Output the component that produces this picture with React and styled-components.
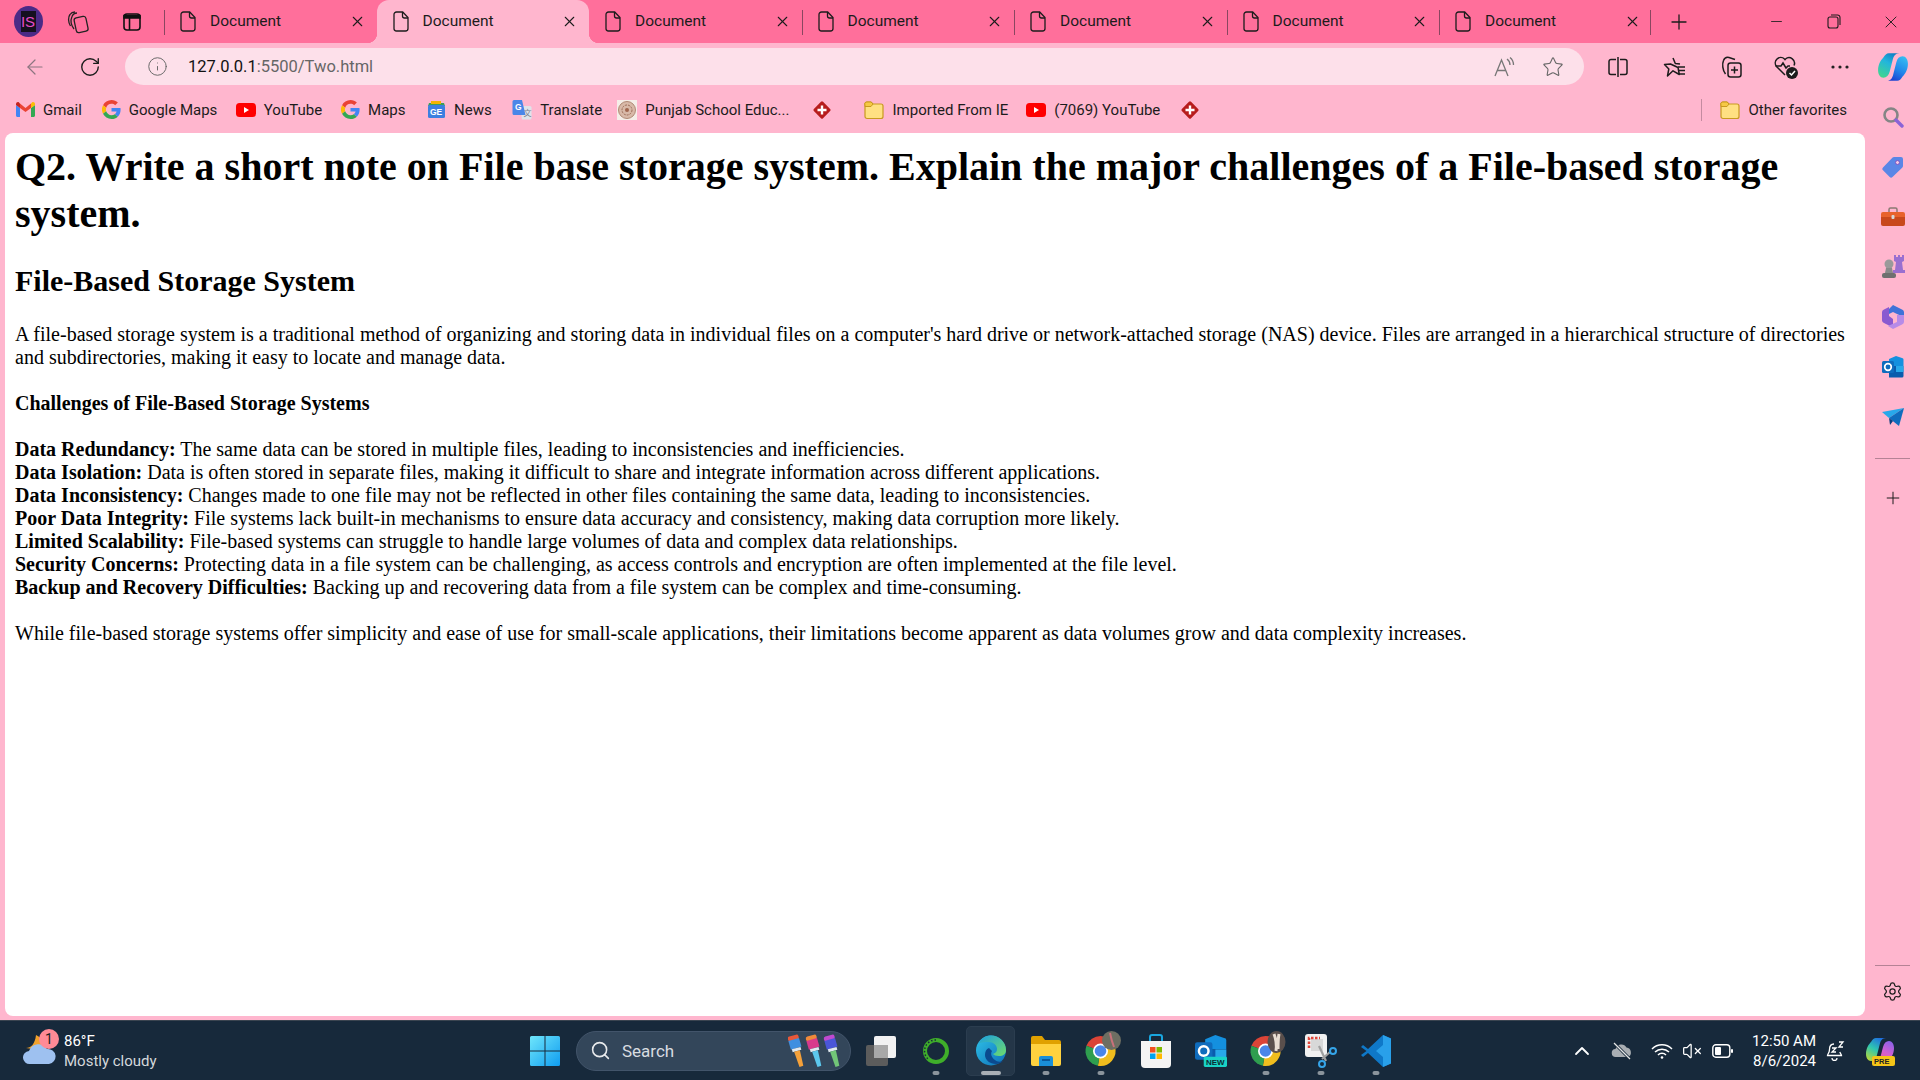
import React from 'react'
import styled, { createGlobalStyle } from 'styled-components'
import { ArrowLeft, RotateCw, Info, Star, X, Plus, Minus, Search, Settings, ChevronUp, VolumeX } from 'lucide-react'

const GlobalStyle = createGlobalStyle`
  html, body { margin: 0; padding: 0; background: #ffb6ce; }
  #root { width: 1920px; height: 1080px; overflow: hidden; }
`

const uiFont = `Roboto, "Open Sans", sans-serif`

const Screen = styled.div`
  width: 1920px;
  height: 1080px;
  display: flex;
  flex-direction: column;
  overflow: hidden;
  background: #ffb6ce;
  font-family: ${uiFont};
  color: #1c1c1c;
`

/* ---------- tab strip ---------- */
const TabStrip = styled.div`
  height: 43px;
  flex: none;
  display: flex;
  align-items: stretch;
  background: #ff6f9b;
`
const StripIcon = styled.div`
  width: ${p => p.$w}px;
  flex: none;
  display: flex;
  align-items: center;
  justify-content: center;
`
const Avatar = styled.div`
  width: 29px;
  height: 31px;
  border-radius: 50%;
  background: #4b2a86;
  display: flex;
  align-items: center;
  justify-content: center;
  color: #e64cc8;
  font-size: 15px;
  font-family: "Liberation Sans", sans-serif;
  &::before {
    content: 'IS';
    width: 15px;
    height: 21px;
    background: #15101e;
    display: flex;
    align-items: center;
    justify-content: center;
  }
`
const Tab = styled.div`
  width: 212.5px;
  flex: none;
  position: relative;
  display: flex;
  align-items: center;
  padding-left: 16px;
  box-sizing: border-box;
  font-size: 15.5px;
  background: ${p => (p.$active ? '#ffb6ce' : 'transparent')};
  border-radius: ${p => (p.$active ? '12px 12px 0 0' : '0')};
  &::before {
    content: '';
    position: absolute;
    left: 0;
    top: 10px;
    height: 25px;
    width: 1px;
    background: ${p => (p.$sep ? '#8a4660' : 'transparent')};
  }
  ${p => p.$active && `
    &::after {
      content: '';
      position: absolute;
      left: -10px;
      right: -10px;
      bottom: 0;
      height: 10px;
      background:
        radial-gradient(circle at 0 0, transparent 10px, #ffb6ce 10.5px) left bottom / 10px 10px no-repeat,
        radial-gradient(circle at 100% 0, transparent 10px, #ffb6ce 10.5px) right bottom / 10px 10px no-repeat;
    }
  `}
`
const TabTitle = styled.span`
  margin-left: 13px;
  flex: 1;
  padding-bottom: 1px;
`
const TabClose = styled.span`
  display: flex;
  margin-right: 11px;
`
const NewTab = styled.div`
  width: 54px;
  flex: none;
  position: relative;
  display: flex;
  align-items: center;
  justify-content: center;
  &::before {
    content: '';
    position: absolute;
    left: -2px;
    top: 10px;
    height: 25px;
    width: 1px;
    background: #8a4660;
  }
`
const WindowButton = styled.div`
  width: ${p => p.$w}px;
  flex: none;
  display: flex;
  align-items: center;
  justify-content: center;
  ${p => p.$push && 'margin-left: auto;'}
`

/* ---------- toolbar ---------- */
const Toolbar = styled.div`
  height: 47px;
  flex: none;
  display: flex;
  align-items: center;
  padding-left: 8px;
  box-sizing: border-box;
`
const ToolButton = styled.div`
  width: ${p => p.$w || 55}px;
  height: 37px;
  flex: none;
  display: flex;
  align-items: center;
  justify-content: center;
`
const AddressBar = styled.div`
  width: 1459px;
  height: 37px;
  flex: none;
  margin-left: 8px;
  border-radius: 19px;
  background: #fde0ea;
  display: flex;
  align-items: center;
  padding-left: 22px;
  padding-right: 6px;
  box-sizing: border-box;
`
const Url = styled.div`
  flex: 1;
  margin-left: 20px;
  font-size: 16.5px;
  color: #666;
  & b { font-weight: 400; color: #111; }
`
const ActionRow = styled.div`
  display: flex;
  margin-left: 6px;
`

/* ---------- middle ---------- */
const Middle = styled.div`
  flex: 1;
  min-height: 0;
  display: flex;
`
const Browser = styled.div`
  width: 1865px;
  flex: none;
  display: flex;
  flex-direction: column;
`
const Favorites = styled.div`
  height: 43px;
  flex: none;
  display: flex;
  align-items: center;
  padding: 0 0 4px 16px;
  box-sizing: border-box;
  font-size: 15px;
`
const Favorite = styled.div`
  display: flex;
  align-items: center;
  gap: 8px;
  margin-right: ${p => p.$gap ?? 20}px;
  white-space: nowrap;
`
const FavDivider = styled.div`
  width: 1px;
  height: 22px;
  background: #c48ba0;
  margin-left: auto;
  margin-right: 18px;
`
const Page = styled.div`
  flex: 1;
  margin: 0 0 4px 5px;
  padding: 10px;
  background: #fff;
  border-radius: 8px;
  color: #000;
  font-family: "Liberation Serif", "Times New Roman", serif;
  font-size: 20px;
  line-height: 23px;
`
const Heading = styled.h1`
  margin: 0 0 27px;
  font-size: 40px;
  line-height: 47px;
`
const SubHeading = styled.h2`
  margin: 0 0 25px;
  font-size: 30px;
  line-height: 34px;
`
const Paragraph = styled.p`
  margin: 0 0 23px;
`
const Sidebar = styled.div`
  width: 55px;
  flex: none;
  display: flex;
  flex-direction: column;
  align-items: center;
  padding: 2px 0 4px;
  box-sizing: border-box;
`
const SideSlot = styled.div`
  width: 55px;
  height: 50px;
  flex: none;
  display: flex;
  align-items: center;
  justify-content: center;
`
const SideRule = styled.div`
  width: 35px;
  height: 1px;
  flex: none;
  margin: ${p => p.$m};
  background: #b58295;
`

/* ---------- taskbar ---------- */
const Taskbar = styled.div`
  height: 60px;
  flex: none;
  display: flex;
  align-items: center;
  background: #17293b;
  border-top: 1px solid #3a4450;
  box-sizing: border-box;
  color: #fff;
  font-family: ${uiFont};
`
const Weather = styled.div`
  width: 517px;
  flex: none;
  display: flex;
  align-items: center;
  padding-left: 23px;
  box-sizing: border-box;
  position: relative;
`
const WeatherBadge = styled.span`
  position: absolute;
  left: 39px;
  top: -2px;
  width: 20px;
  height: 20px;
  border-radius: 50%;
  background: #ff8a96;
  color: #222;
  font-size: 14px;
  display: flex;
  align-items: center;
  justify-content: center;
`
const WeatherText = styled.div`
  margin-left: 7px;
  font-size: 15px;
  line-height: 20px;
  & span { display: block; color: #d4d8dc; }
`
const TaskSlot = styled.div`
  width: 55px;
  height: 50px;
  flex: none;
  position: relative;
  display: flex;
  align-items: center;
  justify-content: center;
  ${p => p.$active && `
    &::before {
      content: '';
      position: absolute;
      inset: 0 3px;
      border-radius: 5px;
      background: #243648;
      border: 1px solid #2b3d4f;
    }
    & > svg { position: relative; }
  `}
  ${p => p.$dot && `
    &::after {
      content: '';
      position: absolute;
      bottom: 1px;
      left: 50%;
      transform: translateX(-50%);
      width: ${p.$active ? 20 : 7}px;
      height: 4px;
      border-radius: 2px;
      background: ${p.$active ? '#a8afb6' : '#8b949c'};
    }
  `}
`
const SearchPill = styled.div`
  width: 275px;
  height: 40px;
  flex: none;
  margin: 0 2px 0 4px;
  border-radius: 20px;
  background: #33465a;
  border: 1px solid #42546a;
  box-sizing: border-box;
  display: flex;
  align-items: center;
  padding-left: 13px;
  padding-right: 6px;
  color: #d8dce0;
  font-size: 17px;
`
const SearchLabel = styled.span`
  flex: 1;
  margin-left: 11px;
`
const Tray = styled.div`
  flex: 1;
  display: flex;
  align-items: center;
  padding-left: 164px;
`
const TrayIcon = styled.div`
  width: ${p => p.$w}px;
  flex: none;
  display: flex;
  justify-content: center;
`
const Clock = styled.div`
  width: 79px;
  flex: none;
  text-align: right;
  font-size: 15px;
  line-height: 20px;
`

/* ---------- drawn icons ---------- */
const DocIcon = () => (
  <svg width="17" height="21" viewBox="0 0 17 21" fill="none" stroke="#1c1c1c" strokeWidth="1.3">
    <path d="M3.5 1h6.2L15 6.5V17.5a2.5 2.5 0 0 1-2.5 2.5h-9A2.5 2.5 0 0 1 1 17.5v-14A2.5 2.5 0 0 1 3.5 1z" />
    <path d="M9.5 1v4a2 2 0 0 0 2 2H15" />
  </svg>
)
const WorkspacesIcon = () => (
  <svg width="24" height="24" viewBox="0 0 24 24" fill="none" stroke="#222" strokeWidth="1.3">
    <rect x="9" y="7" width="12" height="15" rx="2.5" transform="rotate(-12 15 14)" />
    <path d="M8 19C5 15 4.5 10 6 6.5 7 4 9 3 11 3" />
    <path d="M4.5 16C2 12 2 7 4 4.5 5 3 7 2 9 2" />
  </svg>
)
const VerticalTabsIcon = () => (
  <svg width="20" height="20" viewBox="0 0 20 20" fill="none" stroke="#111" strokeWidth="1.6">
    <rect x="2" y="2" width="16" height="16" rx="3" />
    <path d="M2 3.5h16V6H2z" fill="#111" />
    <path d="M7.5 6v12" />
  </svg>
)
const GoogleG = () => (
  <svg width="19" height="19" viewBox="0 0 48 48">
    <path fill="#EA4335" d="M24 9.5c3.5 0 6.7 1.2 9.2 3.6l6.9-6.9C35.9 2.4 30.5 0 24 0 14.6 0 6.5 5.4 2.6 13.2l8 6.2C12.5 13.6 17.8 9.5 24 9.5z" />
    <path fill="#4285F4" d="M47 24.5c0-1.6-.2-3.1-.4-4.5H24v9h12.9c-.6 3-2.2 5.4-4.7 7.1l7.7 6C44.4 38 47 31.8 47 24.5z" />
    <path fill="#FBBC05" d="M10.6 28.6A14.5 14.5 0 0 1 10.6 19.4l-8-6.2a24 24 0 0 0 0 21.6z" />
    <path fill="#34A853" d="M24 48c6.5 0 11.9-2.1 15.9-5.900l-7.700-6c-2.200 1.500-4.900 2.400-8.200 2.400-6.200 0-11.500-4.100-13.400-9.900l-8 6.200C6.500 42.600 14.600 48 24 48z" />
  </svg>
)
const GmailIcon = () => (
  <svg width="19" height="15" viewBox="0 0 19 15">
    <path fill="#4285F4" d="M0 3v10.500C0 14.300.7 15 1.500 15H4V6z" />
    <path fill="#34A853" d="M15 6v9h2.500c.8 0 1.500-.7 1.500-1.500V3z" />
    <path fill="#EA4335" d="M4 6V1.500L9.500 6 15 1.500V6L9.500 10z" />
    <path fill="#C5221F" d="M0 3V2C0 .4 1.800-.5 3 .4L4 1.500V6z" />
    <path fill="#FBBC05" d="M19 3V2c0-1.600-1.800-2.500-3-1.600L15 1.500V6z" />
  </svg>
)
const YoutubeIcon = () => (
  <svg width="20" height="14" viewBox="0 0 20 14">
    <rect width="20" height="14" rx="3.5" fill="#f00" />
    <path d="M8 4l5 3-5 3z" fill="#fff" />
  </svg>
)
const NewsIcon = () => (
  <svg width="19" height="19" viewBox="0 0 19 19">
    <path d="M2 3h15l1 3H1z" fill="#3f9d58" />
    <path d="M4 1h10v3H4z" fill="#f4b400" />
    <rect x="1" y="5" width="17" height="13" rx="1.5" fill="#3d7fe0" />
    <text x="3" y="15" fontSize="8.5" fontWeight="700" fill="#fff" fontFamily="Liberation Sans, sans-serif">GE</text>
  </svg>
)
const TranslateIcon = () => (
  <svg width="20" height="20" viewBox="0 0 20 20">
    <path d="M8 6h10a1.500 1.500 0 0 1 1.500 1.500V18a1.500 1.500 0 0 1-1.500 1.500H10z" fill="#dfe3ea" />
    <text x="11.5" y="16" fontSize="8" fill="#7a8290" fontFamily="Noto Sans CJK SC, sans-serif">文</text>
    <path d="M2 0h8l3.500 15H2a1.500 1.500 0 0 1-1.500-1.500v-12A1.500 1.500 0 0 1 2 0z" fill="#4a86e8" />
    <text x="3" y="10" fontSize="8.5" fontWeight="700" fill="#fff" fontFamily="Liberation Sans, sans-serif">G</text>
  </svg>
)
const CrestIcon = () => (
  <svg width="20" height="20" viewBox="0 0 20 20">
    <rect width="20" height="20" fill="#f5eee8" />
    <circle cx="10" cy="10" r="8.5" fill="#d8b9a8" stroke="#b08a75" />
    <circle cx="10" cy="10" r="5" fill="none" stroke="#9c6d58" strokeDasharray="2 1" />
    <circle cx="10" cy="10" r="2" fill="#a0664e" />
  </svg>
)
const DiamondIcon = () => (
  <svg width="20" height="20" viewBox="0 0 20 20">
    <rect x="3.5" y="3.5" width="13" height="13" rx="1.5" transform="rotate(45 10 10)" fill="#b71c1c" />
    <path d="M10 5.500v9M5.500 10h9" stroke="#fff" strokeWidth="2.4" />
  </svg>
)
const FolderIcon = () => (
  <svg width="20" height="20" viewBox="0 0 20 20">
    <path d="M1 4a2 2 0 0 1 2-2h4l2 2h8a2 2 0 0 1 2 2v10.500a2 2 0 0 1-2 2H3a2 2 0 0 1-2-2z" fill="#ffe082" stroke="#c99a1f" strokeWidth="1.2" />
    <path d="M1 5a2 2 0 0 1 2-3h4l2 2-2 2.500H1z" fill="#f6c945" stroke="#c99a1f" />
  </svg>
)
const ReadAloudIcon = () => (
  <svg width="22" height="22" viewBox="0 0 22 22" fill="none" stroke="#777" strokeWidth="1.3">
    <path d="M2 20L8.500 4 15 20M4.500 14.500h8" />
    <path d="M14 3c2 1.500 3 3.500 3 6M17 1.500c2.500 2 3.500 4.500 3.500 7.500" />
  </svg>
)
const SplitIcon = () => (
  <svg width="22" height="22" viewBox="0 0 22 22" fill="none" stroke="#1c1c1c" strokeWidth="1.5">
    <path d="M9 3.500H4A2 2 0 0 0 2 5.500v11a2 2 0 0 0 2 2h5M13 3.500h5a2 2 0 0 1 2 2v11a2 2 0 0 1-2 2h-5" />
    <path d="M11 1v20" />
  </svg>
)
const FavoritesIcon = () => (
  <svg width="24" height="24" viewBox="0 0 24 24" fill="none" stroke="#1c1c1c" strokeWidth="1.5">
    <path d="M10 3l2.300 5.500L17 9M15 12.500l1.300 7-6.300-3.700L4.500 21l1.300-7L1.500 9.500 7.500 9z" strokeLinejoin="round" />
    <path d="M15 12h7M16 15.500h6M16 19h6" />
  </svg>
)
const CollectionsIcon = () => (
  <svg width="24" height="24" viewBox="0 0 24 24" fill="none" stroke="#1c1c1c" strokeWidth="1.5">
    <rect x="9" y="8" width="13" height="14" rx="2.5" />
    <path d="M15.500 11.500v7M12 15h7" />
    <path d="M6.500 19C3.500 15 3 9 4.500 5.500 5.500 3 8 2 10 2.500l6 2" />
  </svg>
)
const HealthIcon = () => (
  <svg width="26" height="26" viewBox="0 0 26 26" fill="none" stroke="#1c1c1c" strokeWidth="1.5">
    <path d="M12 21L3.500 12.500a5.500 5.500 0 0 1 8-7.500l.5.600.5-.6a5.500 5.500 0 0 1 8.500 6.500" />
    <path d="M2.500 12H8l2-3 3 5 2-2h2" />
    <circle cx="19" cy="19" r="6" fill="#1c1c1c" stroke="none" />
    <path d="M16.500 19l2 2 3.500-4" stroke="#fff" />
  </svg>
)
const DotsIcon = () => (
  <svg width="18" height="4" viewBox="0 0 18 4" fill="#222">
    <circle cx="2" cy="2" r="1.6" /><circle cx="9" cy="2" r="1.6" /><circle cx="16" cy="2" r="1.6" />
  </svg>
)

const ribbon = 'M11 2H21C17 2 15.500 5 14.800 8L12 19C11 23 9 25 6 25C3 25 1 22 1 18C1 12 4 8 6 6C7.500 3.500 9 2 11 2Z'
const CopilotIcon = () => (
  <svg width="32" height="32" viewBox="0 0 30 30">
    <defs>
      <linearGradient id="copA" x1="0.7" y1="0" x2="0.2" y2="1">
        <stop offset="0" stopColor="#0f7fc4" /><stop offset="0.4" stopColor="#22b5dd" /><stop offset="1" stopColor="#43d68d" />
      </linearGradient>
      <linearGradient id="copB" x1="0.7" y1="0" x2="0.2" y2="1">
        <stop offset="0" stopColor="#1b3fd0" /><stop offset="0.45" stopColor="#1f86ea" /><stop offset="1" stopColor="#35bdf2" />
      </linearGradient>
    </defs>
    <path d={ribbon} fill="url(#copA)" />
    <path d={ribbon} fill="url(#copB)" transform="rotate(180 15 15)" />
  </svg>
)
const CopilotPreIcon = () => (
  <svg width="30" height="30" viewBox="0 0 30 30">
    <defs>
      <linearGradient id="preA" x1="0.7" y1="0" x2="0.2" y2="1">
        <stop offset="0" stopColor="#1f6fe0" /><stop offset="0.5" stopColor="#2fc7b0" /><stop offset="1" stopColor="#b8d838" />
      </linearGradient>
      <linearGradient id="preB" x1="0.7" y1="0" x2="0.2" y2="1">
        <stop offset="0" stopColor="#e8607c" /><stop offset="0.5" stopColor="#d45fd0" /><stop offset="1" stopColor="#8a62e8" />
      </linearGradient>
    </defs>
    <path d={ribbon} fill="url(#preA)" />
    <path d={ribbon} fill="url(#preB)" transform="rotate(180 15 15)" />
    <rect x="7" y="20" width="23" height="10" rx="2" fill="#f5c518" />
    <text x="9" y="28" fontSize="7.5" fontWeight="700" fill="#222" fontFamily="Liberation Sans, sans-serif">PRE</text>
  </svg>
)

/* sidebar */
const SideSearch = () => (
  <svg width="22" height="22" viewBox="0 0 22 22" fill="none">
    <circle cx="9" cy="9" r="6.5" stroke="#858585" strokeWidth="2.6" />
    <path d="M14 14l6 6" stroke="#8b63d6" strokeWidth="3.4" strokeLinecap="round" />
  </svg>
)
const SideTag = () => (
  <svg width="22" height="22" viewBox="0 0 22 22">
    <path d="M12 1h7a2 2 0 0 1 2 2v7a2 2 0 0 1-.6 1.400L10.500 21a2 2 0 0 1-2.800 0L1 14.300a2 2 0 0 1 0-2.800L10.600 1.600A2 2 0 0 1 12 1z" fill="#5a86e6" />
    <circle cx="15.5" cy="6.5" r="2" fill="#f2c8e0" stroke="#7a56c6" />
  </svg>
)
const SideToolbox = () => (
  <svg width="24" height="20" viewBox="0 0 24 20">
    <path d="M8 5V2.500A1.500 1.500 0 0 1 9.500 1h5A1.500 1.500 0 0 1 16 2.500V5" fill="none" stroke="#8a7a72" strokeWidth="1.5" />
    <path d="M2 5h20a2 2 0 0 1 2 2v3H0V7a2 2 0 0 1 2-2z" fill="#e8622c" />
    <path d="M0 10h24v7a2 2 0 0 1-2 2H2a2 2 0 0 1-2-2z" fill="#c8481c" />
    <rect x="10.5" y="8" width="3" height="4" rx="1" fill="#d8d8d8" />
  </svg>
)
const SideChess = () => (
  <svg width="24" height="24" viewBox="0 0 24 24">
    <path d="M14 1h2v2h2V1h2v2h2V1h2v6l-2 1 1 8h2v3H13v-3h2l1-8-2-1z" fill="#9a6fd0" transform="translate(-1 -1)" />
    <circle cx="8" cy="9" r="4.5" fill="#9a9a9a" />
    <path d="M5 13h6l1 5H4z" fill="#8a8a8a" />
    <rect x="1" y="18" width="14" height="5" rx="2" fill="#6f6f6f" />
  </svg>
)
const SideM365 = () => (
  <svg width="22" height="24" viewBox="0 0 22 24">
    <path d="M11 0l9 4.500a3 3 0 0 1 2 3V12l-7-3-4-2-4 2V4z" fill="#3f72d8" />
    <path d="M0 7.500a3 3 0 0 1 2-3L7 2v9l4 3 0 6-3 1-6-3a3 3 0 0 1-2-3z" fill="#8a5ad0" />
    <path d="M22 10v6.500a3 3 0 0 1-2 3L11 24l-5-3 9-4V10z" fill="#b78be8" />
  </svg>
)
const OutlookIcon = ({ size = 22, fresh }) => (
  <svg width={size} height={size} viewBox="0 0 22 22">
    <path d="M7 3l7-3 6 2a1.500 1.500 0 0 1 1.500 1.500V10H7z" fill="#1490df" />
    <path d="M7 10h14.500v10a1.500 1.500 0 0 1-1.500 1.500H7z" fill="#0a5cad" />
    <path d="M14 10h7.500v6H14z" fill="#28a8ea" />
    <rect x="0" y="5" width="12" height="12" rx="1.5" fill="#0f6cbd" />
    <circle cx="6" cy="11" r="3.3" fill="none" stroke="#fff" strokeWidth="1.7" />
    {fresh && <rect x="6" y="15" width="16" height="7" rx="1" fill="#19d3c5" />}
    {fresh && <text x="7.5" y="20.8" fontSize="5.5" fontWeight="700" fill="#0b2b33" fontFamily="Liberation Sans, sans-serif">NEW</text>}
  </svg>
)
const SidePlane = () => (
  <svg width="22" height="18" viewBox="0 0 22 18">
    <path d="M0 4L22 0 7 10z" fill="#28a8ea" />
    <path d="M22 0L17 18 7 10z" fill="#0f6cbd" />
    <path d="M7 10l1 7 3-4z" fill="#0a3f80" />
  </svg>
)

/* taskbar */
const WeatherIcon = () => (
  <svg width="34" height="36" viewBox="0 0 34 36">
    <path d="M3 15C8 15 12 11 13 2c5 2 8 7 7 14H10z" fill="#f2a22b" />
    <path d="M7 31a6.500 6.500 0 0 1-1-13 10 10 0 0 1 18-2 7.500 7.500 0 0 1 2 15z" fill="#9ec1f0" />
  </svg>
)
const WindowsLogo = () => (
  <svg width="30" height="30" viewBox="0 0 30 30">
    <defs>
      <linearGradient id="win" x1="0" y1="0" x2="1" y2="1">
        <stop offset="0" stopColor="#6fe6fb" /><stop offset="1" stopColor="#0f9cf0" />
      </linearGradient>
    </defs>
    <path d="M0 1.500A1.500 1.500 0 0 1 1.500 0h13v14.500H0zM15.500 0h13A1.500 1.500 0 0 1 30 1.500v13H15.500zM0 15.500h14.500V30h-13A1.500 1.500 0 0 1 0 28.500zM15.500 15.500H30v13a1.500 1.500 0 0 1-1.500 1.500h-13z" fill="url(#win)" />
  </svg>
)
const brushes = [
  { x: 9, tip: '#e8583a', head: '#3f8fe0', stick: '#f5a13a' },
  { x: 27, tip: '#f08a3a', head: '#d83a8c', stick: '#5cc8ee' },
  { x: 45, tip: '#c04ad0', head: '#4a56d8', stick: '#72c678' },
]
const Brushes = () => (
  <svg width="56" height="36" viewBox="0 0 56 36">
    {brushes.map(b => (
      <g key={b.x} transform={`rotate(-16 ${b.x} 18)`}>
        <rect x={b.x - 5.5} y="2" width="11" height="5" rx="2" fill={b.tip} />
        <rect x={b.x - 5.5} y="6" width="11" height="9" fill={b.head} />
        <rect x={b.x - 4.5} y="15" width="9" height="3" fill="#dfe8ef" />
        <path d={`M${b.x - 3} 18h6l-1 16h-4z`} fill={b.stick} />
      </g>
    ))}
  </svg>
)
const TaskViewIcon = () => (
  <svg width="30" height="30" viewBox="0 0 30 30">
    <rect x="0" y="9" width="22" height="21" rx="2" fill="#5c5c5c" />
    <rect x="8" y="0" width="22" height="22" rx="2" fill="#f2f2f2" />
    <rect x="8" y="9" width="14" height="13" fill="#a8a8a8" />
  </svg>
)
const RingIcon = () => (
  <svg width="28" height="30" viewBox="0 0 28 30" fill="none">
    <circle cx="14" cy="15" r="11" stroke="#3fae2a" strokeWidth="4" />
    <path d="M14 4A11 11 0 0 0 6 23" stroke="#17293b" strokeWidth="1.5" strokeDasharray="1.5 2" />
  </svg>
)
const EdgeIcon = () => (
  <svg width="30" height="31" viewBox="0 0 30 31">
    <defs>
      <linearGradient id="edgeA" x1="0" y1="0" x2="1" y2="1">
        <stop offset="0" stopColor="#2fc2e8" /><stop offset="1" stopColor="#0d6fb8" />
      </linearGradient>
      <linearGradient id="edgeB" x1="0" y1="0" x2="1" y2="1">
        <stop offset="0" stopColor="#1c9fe0" /><stop offset="1" stopColor="#6fdc6a" />
      </linearGradient>
    </defs>
    <circle cx="15" cy="15.5" r="15" fill="url(#edgeA)" />
    <path d="M3 8C6 3 10 .5 15 .5 23 .5 30 7 30 15c0 4-3 6-7 6-3 0-5-1-6-2 3-1 4-3 4-5 0-4-4-7-8-7-4 0-8 .5-10 1z" fill="url(#edgeB)" />
    <path d="M13 13c-3 1-4 4-4 7 0 5 5 9 11 9 3 0 5-1 7-3-3 1-6 1-8-1-3-2-5-6-3-9z" fill="#0b4a8f" />
  </svg>
)
const ExplorerIcon = () => (
  <svg width="30" height="31" viewBox="0 0 30 31">
    <path d="M0 3a2 2 0 0 1 2-2h9l3 4h14a2 2 0 0 1 2 2v4H0z" fill="#e0a100" />
    <path d="M0 9h30v20a2 2 0 0 1-2 2H2a2 2 0 0 1-2-2z" fill="#ffd23f" />
    <path d="M8 23a2 2 0 0 1 2-2h10a2 2 0 0 1 2 2v8H8z" fill="#1a8fd8" />
    <rect x="11" y="24" width="8" height="2" fill="#0b5a9c" />
  </svg>
)

// one slice of the chrome ring, angles in degrees
const slice = (from, to, r = 15, cx = 22.5, cy = 20) => {
  const pt = a => `${cx + r * Math.cos((a * Math.PI) / 180)} ${cy + r * Math.sin((a * Math.PI) / 180)}`
  return `M${cx} ${cy}L${pt(from)}A${r} ${r} 0 0 1 ${pt(to)}Z`
}
const ChromeIcon = ({ tall }) => (
  <svg width="45" height="40" viewBox="0 0 45 40">
    <path d={slice(-160, -20)} fill="#db4437" />
    <path d={slice(-20, 100)} fill="#f0bd1e" />
    <path d={slice(100, 200)} fill="#2f9e4f" />
    <circle cx="22.5" cy="20" r="7.5" fill="#fff" />
    <circle cx="22.5" cy="20" r="5.8" fill="#4a86e8" />
    {tall ? (
      <>
        <ellipse cx="33.5" cy="11" rx="9" ry="11" fill="#5a4f4c" />
        <path d="M31 3c2 5 3 10 2 17M36 3c-1 5-1 10-1 15" stroke="#e8ddd2" strokeWidth="3" fill="none" />
      </>
    ) : (
      <>
        <circle cx="33.5" cy="9.5" r="9.5" fill="#6d6e62" />
        <path d="M32 2c1 5 2 9 4 14" stroke="#c9717a" strokeWidth="2" fill="none" />
      </>
    )}
  </svg>
)
const StoreIcon = () => (
  <svg width="30" height="34" viewBox="0 0 30 34">
    <path d="M9 7V3a2 2 0 0 1 2-2h8a2 2 0 0 1 2 2v4" fill="none" stroke="#19a7e0" strokeWidth="2" />
    <path d="M0 7h30v23a4 4 0 0 1-4 4H4a4 4 0 0 1-4-4z" fill="#f4f4f4" />
    <rect x="9" y="13" width="5.5" height="5.5" fill="#f25022" />
    <rect x="15.5" y="13" width="5.5" height="5.5" fill="#7fba00" />
    <rect x="9" y="19.5" width="5.5" height="5.5" fill="#00a4ef" />
    <rect x="15.5" y="19.5" width="5.5" height="5.5" fill="#ffb900" />
  </svg>
)
const SnipIcon = () => (
  <svg width="32" height="34" viewBox="0 0 32 34">
    <rect x="0" y="0" width="22" height="23" rx="3" fill="#f1f1f1" />
    <rect x="6" y="5" width="12" height="12" fill="#d8d8d8" />
    <path d="M4 14V4h11" fill="none" stroke="#e0453a" strokeWidth="2.5" strokeDasharray="2.5 1.5" />
    <path d="M14 12l7 15M17 25l8-7" stroke="#a0a0a0" strokeWidth="2.2" />
    <circle cx="17" cy="30" r="3" fill="none" stroke="#35a4e8" strokeWidth="2" />
    <circle cx="28" cy="17" r="3" fill="none" stroke="#35a4e8" strokeWidth="2" />
  </svg>
)
const VsCodeIcon = () => (
  <svg width="30" height="32" viewBox="0 0 30 32">
    <path d="M22 0l8 3.500v25L22 32 7 18l-5 4-2-2 5.500-4L0 12l2-2 5 4z" fill="#0f78c8" />
    <path d="M22 0l8 3.500v25L22 32V22l-7-6 7-6z" fill="#29a0ea" />
  </svg>
)
const OneDriveOff = () => (
  <svg width="22" height="18" viewBox="0 0 22 18">
    <path d="M5 15a4 4 0 0 1-.5-8 6 6 0 0 1 11-1.500A5 5 0 0 1 17 15z" fill="#a9aeb3" />
    <path d="M3 1l16 16" stroke="#17293b" strokeWidth="3" />
    <path d="M3 1l16 16" stroke="#e6e6e6" strokeWidth="1.3" />
  </svg>
)
const WifiIcon = () => (
  <svg width="22" height="16" viewBox="0 0 22 16" fill="none" stroke="#fff" strokeWidth="1.5">
    <path d="M1 6a14 14 0 0 1 20 0M4 9a10 10 0 0 1 14 0M7 12a5.500 5.500 0 0 1 8 0" />
    <circle cx="11" cy="14.5" r="1.3" fill="#fff" stroke="none" />
  </svg>
)
const BatteryIcon = () => (
  <svg width="21" height="14" viewBox="0 0 21 14">
    <rect x=".8" y=".8" width="17" height="12.4" rx="3" fill="none" stroke="#fff" strokeWidth="1.4" />
    <rect x="3" y="3" width="6" height="8" rx="1" fill="#fff" />
    <rect x="19" y="5" width="2" height="4" rx="1" fill="#fff" />
  </svg>
)
const BellIcon = () => (
  <svg width="20" height="20" viewBox="0 0 20 20" fill="none" stroke="#fff" strokeWidth="1.3">
    <path d="M8 3C4.500 3 3.500 6 3.500 8.500 3.500 12 1.500 13 1.500 14.500h14c0-1-1.200-2-1.700-3.500" />
    <path d="M6 17a2.500 2.500 0 0 0 5 0" />
    <path d="M6 7h4l-4 4h4M13 1h4l-4 5h4" />
  </svg>
)

const tabs = [1, 2, 3, 4, 5, 6, 7]

const favorites = [
  { icon: <GmailIcon />, label: 'Gmail', gap: 20 },
  { icon: <GoogleG />, label: 'Google Maps', gap: 18.5 },
  { icon: <YoutubeIcon />, label: 'YouTube', gap: 19 },
  { icon: <GoogleG />, label: 'Maps', gap: 21.5 },
  { icon: <NewsIcon />, label: 'News', gap: 20.5 },
  { icon: <TranslateIcon />, label: 'Translate', gap: 15 },
  { icon: <CrestIcon />, label: 'Punjab School Educ...', gap: 23 },
  { icon: <DiamondIcon />, gap: 32 },
  { icon: <FolderIcon />, label: 'Imported From IE', gap: 18 },
  { icon: <YoutubeIcon />, label: '(7069) YouTube', gap: 19.5 },
  { icon: <DiamondIcon /> },
]

const sideIcons = [<SideSearch />, <SideTag />, <SideToolbox />, <SideChess />, <SideM365 />, <OutlookIcon />, <SidePlane />]

const taskIcons = [
  { icon: <TaskViewIcon /> },
  { icon: <RingIcon />, dot: true },
  { icon: <EdgeIcon />, dot: true, active: true },
  { icon: <ExplorerIcon />, dot: true },
  { icon: <ChromeIcon />, dot: true },
  { icon: <StoreIcon /> },
  { icon: <OutlookIcon size={32} fresh /> },
  { icon: <ChromeIcon tall />, dot: true },
  { icon: <SnipIcon />, dot: true },
  { icon: <VsCodeIcon />, dot: true },
]

const challenges = [
  ['Data Redundancy:', ' The same data can be stored in multiple files, leading to inconsistencies and inefficiencies.'],
  ['Data Isolation:', ' Data is often stored in separate files, making it difficult to share and integrate information across different applications.'],
  ['Data Inconsistency:', ' Changes made to one file may not be reflected in other files containing the same data, leading to inconsistencies.'],
  ['Poor Data Integrity:', ' File systems lack built-in mechanisms to ensure data accuracy and consistency, making data corruption more likely.'],
  ['Limited Scalability:', ' File-based systems can struggle to handle large volumes of data and complex data relationships.'],
  ['Security Concerns:', ' Protecting data in a file system can be challenging, as access controls and encryption are often implemented at the file level.'],
  ['Backup and Recovery Difficulties:', ' Backing up and recovering data from a file system can be complex and time-consuming.'],
]

const App = () => (
  <Screen>
    <GlobalStyle />
    <TabStrip>
      <StripIcon $w={56}><Avatar /></StripIcon>
      <StripIcon $w={43}><WorkspacesIcon /></StripIcon>
      <StripIcon $w={65}><VerticalTabsIcon /></StripIcon>
      {tabs.map(n => (
        <Tab key={n} $active={n === 2} $sep={n !== 2 && n !== 3}>
          <DocIcon />
          <TabTitle>Document</TabTitle>
          <TabClose><X size={17} strokeWidth={1.5} /></TabClose>
        </Tab>
      ))}
      <NewTab><Plus size={24} strokeWidth={1.3} /></NewTab>
      <WindowButton $w={57} $push><Minus size={17} strokeWidth={1.2} /></WindowButton>
      <WindowButton $w={57}>
        <svg width="14" height="15" viewBox="0 0 14 15" fill="none" stroke="#1c1c1c" strokeWidth="1.1">
          <rect x="1" y="3" width="10" height="11" rx="2" />
          <path d="M4 1h6.500A2.500 2.500 0 0 1 13 3.500V11" />
        </svg>
      </WindowButton>
      <WindowButton $w={58}><X size={20} strokeWidth={1.1} /></WindowButton>
    </TabStrip>

    <Toolbar>
      <ToolButton $w={54}><ArrowLeft size={24} strokeWidth={1.2} color="#8c7580" /></ToolButton>
      <ToolButton $w={55}><RotateCw size={22} strokeWidth={1.5} /></ToolButton>
      <AddressBar>
        <Info size={21} strokeWidth={1.1} color="#666" />
        <Url><b>127.0.0.1</b>:5500/Two.html</Url>
        <ToolButton $w={48}><ReadAloudIcon /></ToolButton>
        <ToolButton $w={50}><Star size={22} strokeWidth={1.2} color="#666" /></ToolButton>
      </AddressBar>
      <ActionRow>
        <ToolButton $w={56}><SplitIcon /></ToolButton>
        <ToolButton $w={57}><FavoritesIcon /></ToolButton>
        <ToolButton $w={56}><CollectionsIcon /></ToolButton>
        <ToolButton $w={53}><HealthIcon /></ToolButton>
        <ToolButton $w={55}><DotsIcon /></ToolButton>
        <ToolButton $w={52}><CopilotIcon /></ToolButton>
      </ActionRow>
    </Toolbar>

    <Middle>
      <Browser>
        <Favorites>
          {favorites.map((f, i) => (
            <Favorite key={i} $gap={f.gap}>{f.icon}{f.label}</Favorite>
          ))}
          <FavDivider />
          <Favorite $gap={18}><FolderIcon />Other favorites</Favorite>
        </Favorites>
        <Page>
          <Heading>Q2. Write a short note on File base storage system. Explain the major challenges of a File-based storage system.</Heading>
          <SubHeading>File-Based Storage System</SubHeading>
          <Paragraph>A file-based storage system is a traditional method of organizing and storing data in individual files on a computer's hard drive or network-attached storage (NAS) device. Files are arranged in a hierarchical structure of directories and subdirectories, making it easy to locate and manage data.</Paragraph>
          <Paragraph><b>Challenges of File-Based Storage Systems</b></Paragraph>
          <Paragraph>
            {challenges.map(([title, text]) => (
              <React.Fragment key={title}><b>{title}</b>{text}<br /></React.Fragment>
            ))}
          </Paragraph>
          <Paragraph>While file-based storage systems offer simplicity and ease of use for small-scale applications, their limitations become apparent as data volumes grow and data complexity increases.</Paragraph>
        </Page>
      </Browser>
      <Sidebar>
        {sideIcons.map((icon, i) => <SideSlot key={i}>{icon}</SideSlot>)}
        <SideRule $m="16px 0 14px" />
        <SideSlot><Plus size={20} strokeWidth={1.2} /></SideSlot>
        <SideRule $m="auto 0 0" />
        <SideSlot><Settings size={21} strokeWidth={1.4} /></SideSlot>
      </Sidebar>
    </Middle>

    <Taskbar>
      <Weather>
        <WeatherIcon />
        <WeatherBadge>1</WeatherBadge>
        <WeatherText>86°F<span>Mostly cloudy</span></WeatherText>
      </Weather>
      <TaskSlot><WindowsLogo /></TaskSlot>
      <SearchPill>
        <Search size={21} strokeWidth={1.8} color="#e8eaec" />
        <SearchLabel>Search</SearchLabel>
        <Brushes />
      </SearchPill>
      {taskIcons.map((t, i) => (
        <TaskSlot key={i} $dot={t.dot} $active={t.active}>{t.icon}</TaskSlot>
      ))}
      <Tray>
        <TrayIcon $w={30}><ChevronUp size={24} strokeWidth={1.8} /></TrayIcon>
        <TrayIcon $w={50}><OneDriveOff /></TrayIcon>
        <TrayIcon $w={30}><WifiIcon /></TrayIcon>
        <TrayIcon $w={30}><VolumeX size={20} strokeWidth={1.5} /></TrayIcon>
        <TrayIcon $w={30}><BatteryIcon /></TrayIcon>
        <Clock>12:50 AM<br />8/6/2024</Clock>
        <TrayIcon $w={39}><BellIcon /></TrayIcon>
        <TrayIcon $w={50}><CopilotPreIcon /></TrayIcon>
      </Tray>
    </Taskbar>
  </Screen>
)

export default App
